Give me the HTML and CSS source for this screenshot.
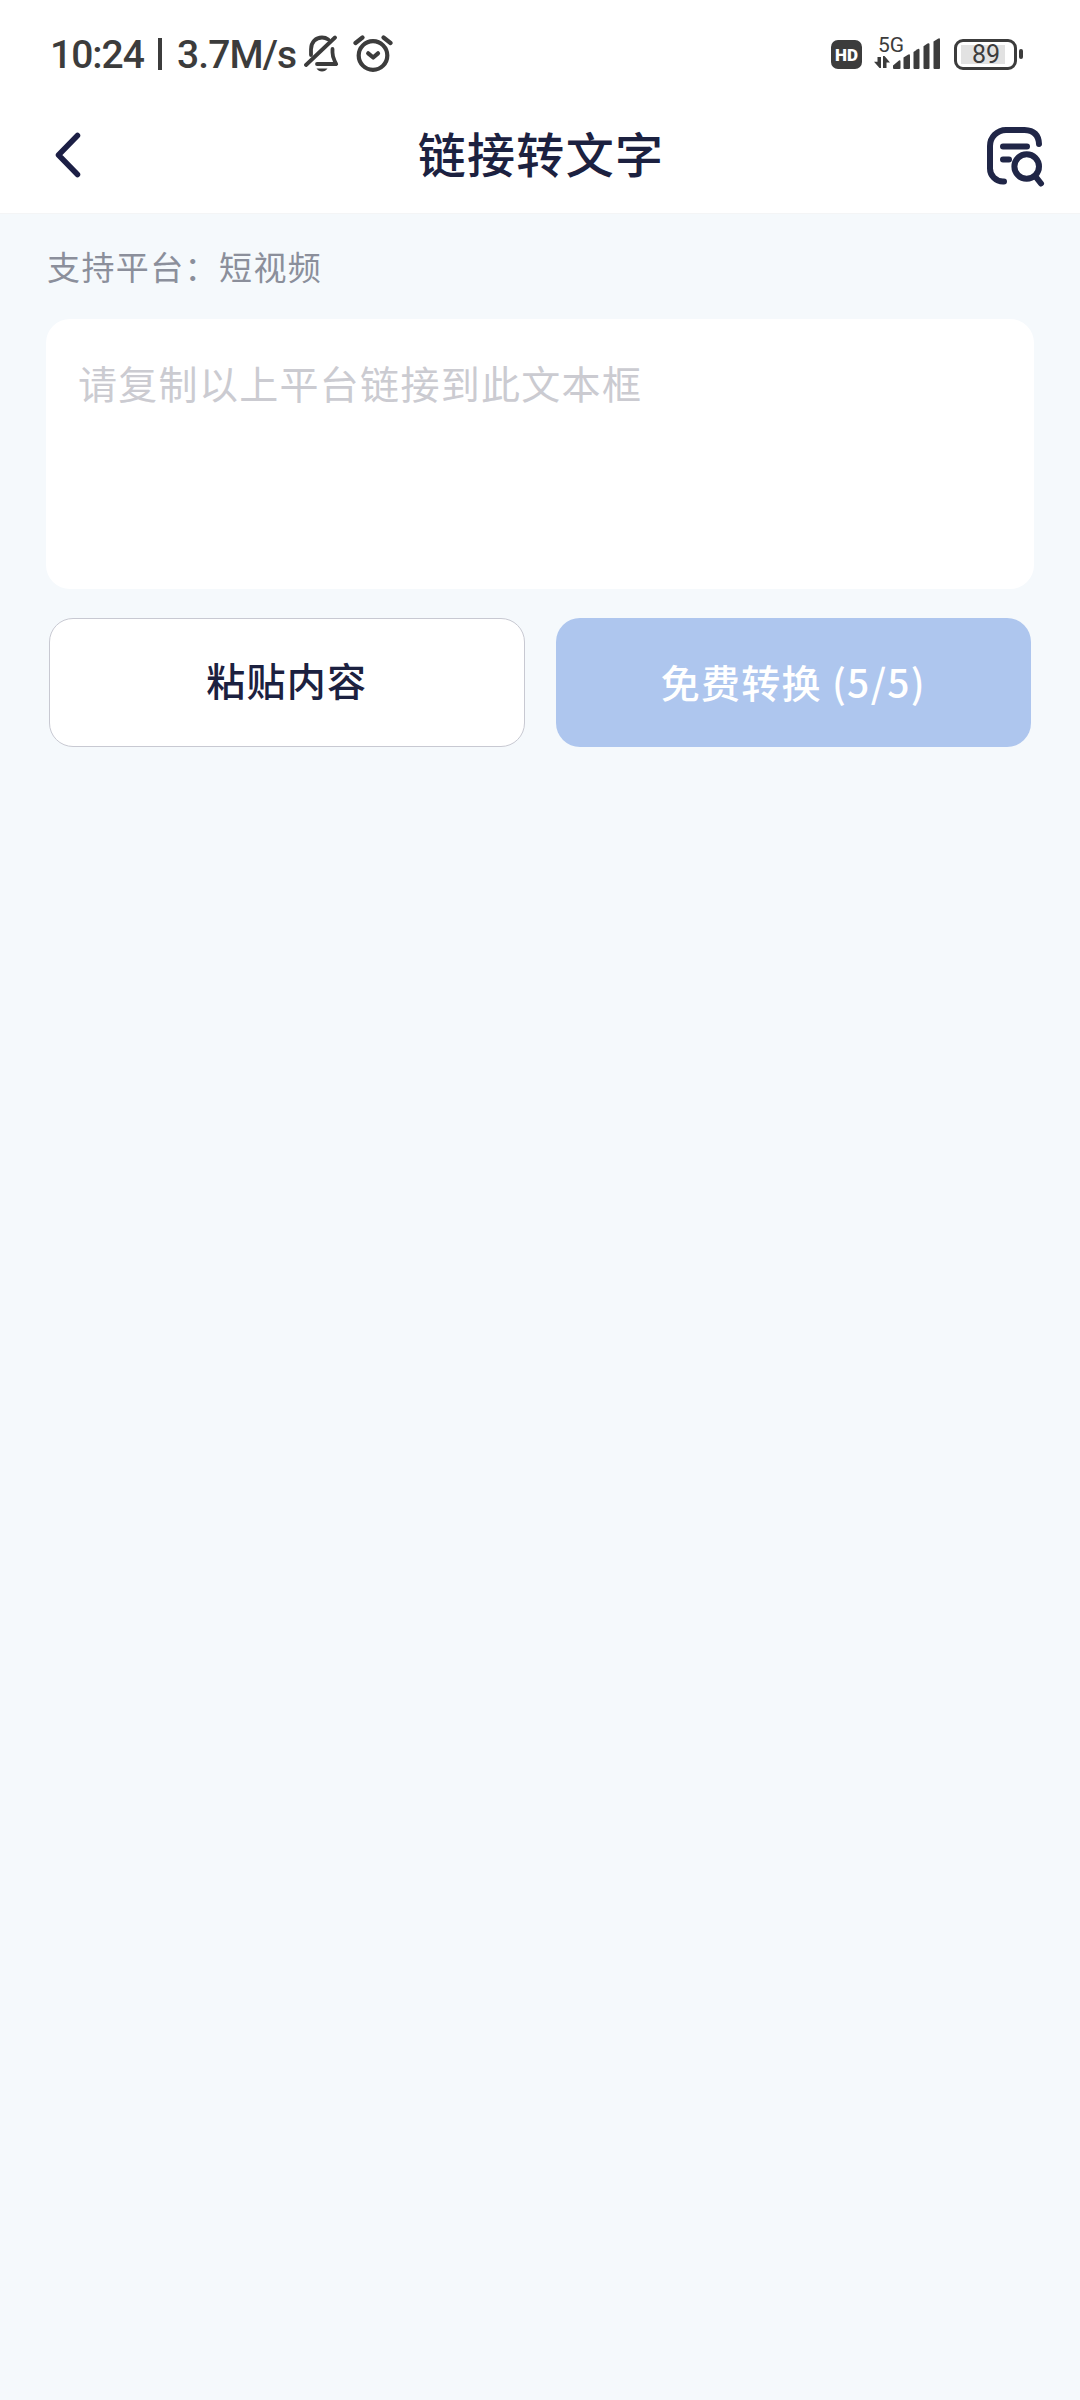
FILE: index.html
```html
<!DOCTYPE html>
<html lang="zh-CN">
  <head>
    <meta charset="UTF-8" />
    <meta name="viewport" content="width=device-width, initial-scale=1.0" />
    <title>链接转文字</title>
    <link rel="stylesheet" href="styles.css">
  </head>
  <body>
    <div class="status-bar">
      <div class="status-left">
        <span class="time">10:24</span>
        <span class="divider"></span>
        <span class="speed">3.7M/s</span>
        <svg class="icon-mute" width="36" height="38" viewBox="0 0 36 38" fill="none" stroke="#3c3c3c" stroke-width="3.8" stroke-linecap="round" stroke-linejoin="round">
          <path d="M7 20V14.500C7 7 12 2.500 18 2.500c2.500 0 4.500.7 6.300 2" />
          <path d="M28.500 14v3.500c0 3 .7 5.500 2.200 8.500l1.500 3H13" />
          <path d="M2 30 31 2.500" />
          <path d="M12.500 33.500h11c-1.500 2-3 3-5.500 3s-4-1-5.500-3z" fill="#3c3c3c" stroke="none" />
        </svg>
        <svg class="icon-alarm" width="40" height="38" viewBox="0 0 40 38" fill="none" stroke="#3c3c3c" stroke-width="4.200" stroke-linecap="round" stroke-linejoin="round">
          <circle cx="20" cy="20.500" r="14.300" />
          <path d="M2.500 8 9.500 2.500M37.500 8 30.500 2.500" />
          <path d="M15.200 18.300 20.200 22.500l4.800-4.200" />
        </svg>
      </div>
      <div class="status-right">
        <span class="hd">HD</span>
        <div class="signal">
          <span class="network">5G</span>
          <svg width="66" height="34" viewBox="0 0 66 34" fill="#3c3c3c">
            <path d="M3.500 20h3.500v11H5.500L0 24.700h3.500zM9 19h1.500L16 25.500h-3.500V31H9z" />
            <path d="M19 31v-2.500l6-5q1.500-.8 1.500 1V31q0 1-1 1H20q-1 0-1-1z" />
            <path d="M29.500 31V20.500l4.500-2.800q2-1 2 1V31q0 1-1 1h-4.500q-1 0-1-1z" />
            <path d="M39.500 31V15l4-2.800q2-1 2 1V31q0 1-1 1h-4q-1 0-1-1z" />
            <path d="M49.500 31V9.300l4-2.800q2-1 2 1V31q0 1-1 1h-4q-1 0-1-1z" />
            <path d="M59.500 31V4.500l4.500-2.800q2-1 2 1V31q0 1-1 1h-4.500q-1 0-1-1z" />
          </svg>
        </div>
        <div class="battery">
          <span class="battery-level">89</span>
        </div>
        <span class="battery-tip"></span>
      </div>
    </div>

    <header class="nav-bar">
      <svg class="icon-back" width="28" height="46" viewBox="0 0 28 46" fill="none" stroke="#1c1f45" stroke-width="5.500" stroke-linecap="round" stroke-linejoin="round">
        <path d="M22.500 3.500 3.500 23 22.500 42.500" />
      </svg>
      <h1 class="title">链接转文字</h1>
      <svg class="icon-history" width="58" height="62" viewBox="0 0 58 62" fill="none" stroke="#202647" stroke-width="6" stroke-linecap="round">
        <path d="M17 55.500h-1A13 13 0 0 1 3 42.500V20A16 16 0 0 1 19 4H37.500Q51.500 4.500 52 18" />
        <path d="M16 20.500H40M16 33.500H22" />
        <circle cx="39.700" cy="40.500" r="12.300" />
        <path d="M48.500 50.500 54 57.500" />
      </svg>
    </header>

    <main class="content">
      <p class="platforms">支持平台：短视频</p>
      <textarea class="link-input" placeholder="请复制以上平台链接到此文本框"></textarea>
      <div class="actions">
        <button class="btn btn-paste" type="button">粘贴内容</button>
        <button class="btn btn-convert" type="button">免费转换 (5/5)</button>
      </div>
    </main>
  </body>
</html>
```

FILE: styles.css
```css
* {
  box-sizing: border-box;
}

body {
  font-family: "Noto Sans CJK SC", sans-serif;
  background-color: #f5f9fc;
  margin: 0;
  min-height: 2400px;
}

.status-bar {
  background-color: white;
  height: 108px;
  padding: 0 57px 0 50px;
  display: flex;
  justify-content: space-between;
  align-items: center;
  color: #3c3c3c;
  font-family: Roboto, sans-serif;
}

.status-left,
.status-right {
  display: flex;
  align-items: center;
}

.time,
.speed {
  font-size: 39px;
  font-weight: 500;
  line-height: 44px;
  white-space: nowrap;
  padding-top: 2px;
}

.time {
  width: 94px;
  letter-spacing: -1px;
}

.divider {
  width: 4px;
  height: 32px;
  margin-left: 14px;
  background-color: #3c3c3c;
}

.speed {
  width: 120px;
  margin-left: 15px;
  letter-spacing: -0.9px;
}

.icon-mute {
  margin-left: 7px;
}

.icon-alarm {
  margin-left: 13px;
}

.hd {
  width: 31px;
  height: 29px;
  border-radius: 7px;
  background-color: #3c3c3c;
  color: white;
  font-size: 17px;
  font-weight: 900;
  line-height: 30px;
  text-align: center;
}

.signal {
  position: relative;
  height: 34px;
  margin-left: 12px;
}

.signal svg {
  display: block;
}

.network {
  position: absolute;
  left: 4px;
  top: -2px;
  font-size: 21px;
  line-height: 20px;
}

.battery {
  width: 63px;
  height: 31px;
  margin-left: 14px;
  padding: 3px 4px;
  border: 3px solid #3c3c3c;
  border-radius: 9px;
}

.battery-level {
  display: block;
  width: 44px;
  height: 19px;
  background-color: #e2e2e2;
  font-size: 25px;
  line-height: 20px;
  text-align: center;
  text-indent: 6px;
}

.battery-tip {
  width: 4px;
  height: 10px;
  margin-left: 2px;
  border-radius: 2px;
  background-color: #3c3c3c;
}

.nav-bar {
  background-color: white;
  height: 106px;
  padding: 0 35px 12px 55px;
  border-bottom: 1px solid #f4f5f6;
  display: flex;
  justify-content: space-between;
  align-items: center;
}

.title {
  margin: 0 0 5px 12px;
  color: #1c2140;
  font-size: 48px;
  font-weight: 500;
  letter-spacing: 1.3px;
  line-height: 60px;
}

.icon-history {
  margin-top: 5px;
}

.content {
  padding: 27px 46px;
}

.platforms {
  margin: 0 0 28px 1px;
  color: #8b8f9b;
  font-size: 33px;
  letter-spacing: 1.4px;
  line-height: 50px;
}

.link-input {
  display: block;
  width: 100%;
  height: 270px;
  padding: 35px 32px;
  border: none;
  border-radius: 24px;
  background-color: white;
  font-family: inherit;
  font-size: 39px;
  letter-spacing: 1.3px;
  line-height: 56px;
  resize: none;
}

.link-input::placeholder {
  color: #cbcbd1;
}

.actions {
  display: grid;
  grid-template-columns: 1fr 1fr;
  gap: 31px;
  margin: 29px 3px 0;
}

.btn {
  height: 129px;
  padding: 0 0 4px;
  border: none;
  border-radius: 24px;
  font-family: inherit;
  font-size: 39px;
  font-weight: 500;
  letter-spacing: 1.3px;
}

.btn-paste {
  padding-bottom: 8px;
  background-color: white;
  border: 1px solid #c8c9d2;
  color: #1c2140;
}

.btn-convert {
  background-color: #aec6ee;
  color: white;
}
```
